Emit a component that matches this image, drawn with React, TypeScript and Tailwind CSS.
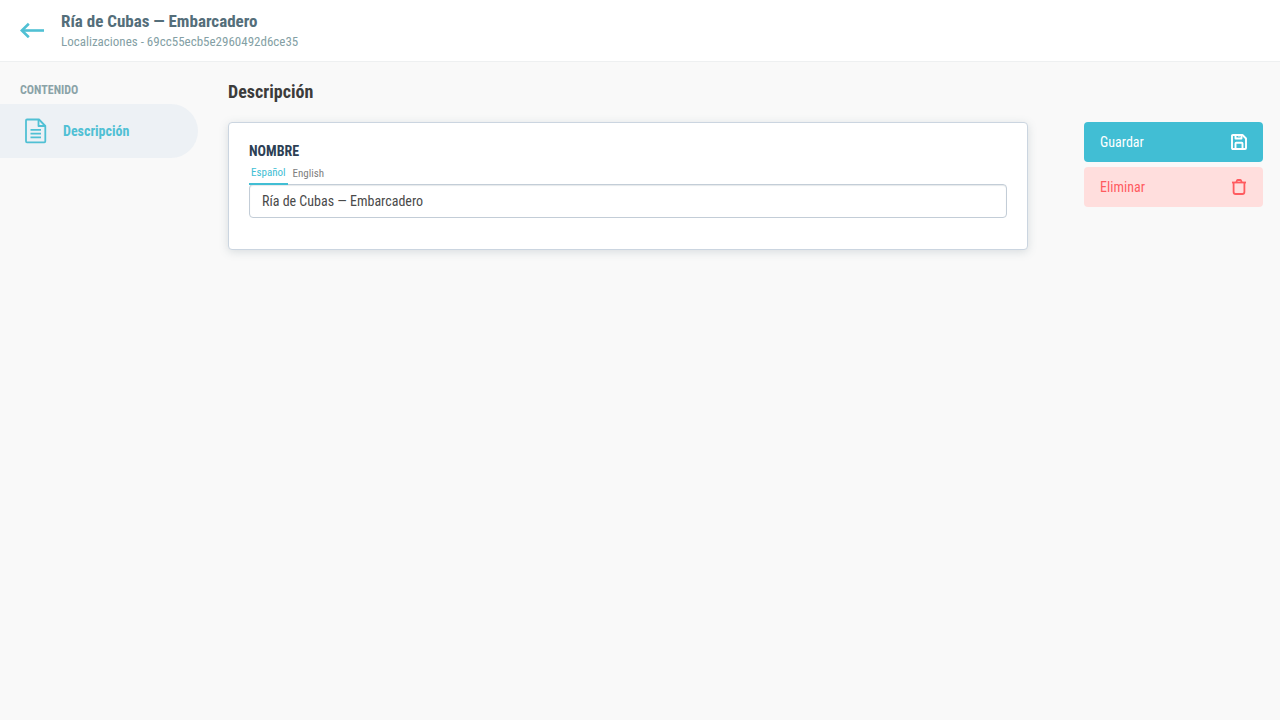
import { useState } from "react";

type Lang = "es" | "en";

const languages: { id: Lang; label: string }[] = [
  { id: "es", label: "Español" },
  { id: "en", label: "English" },
];

function ArrowIcon() {
  return (
    <svg width="24" height="16" viewBox="0 0 24 16" fill="none" stroke="currentColor" strokeWidth="2.6" aria-hidden="true">
      <path d="M24 8.5H2" />
      <path d="M8.8 1.7 1.8 8.5 8.8 15.3" />
    </svg>
  );
}

function DocumentIcon() {
  return (
    <svg width="22" height="26" viewBox="0 0 22 26" fill="none" stroke="currentColor" strokeWidth="1.8" strokeLinejoin="round" aria-hidden="true">
      <path d="M2 1.5H14L20.3 8V23.3Q20.3 24.3 19.3 24.3H2Q1 24.3 1 23.3V2.5Q1 1.5 2 1.5Z" />
      <path d="M13.5 1.5V8H20.3" />
      <path d="M5.5 11.8H16M5.5 15.6H16M5.5 19.4H16" />
    </svg>
  );
}

function SaveIcon() {
  return (
    <svg width="16" height="16" viewBox="0 0 16 16" fill="none" stroke="currentColor" strokeWidth="1.9" strokeLinejoin="round" aria-hidden="true">
      <path d="M2 1H11.5L15 4.5V14Q15 15 14 15H2Q1 15 1 14V2Q1 1 2 1Z" />
      <path d="M4.5 1V4.5H10.5V1" />
      <path d="M8 1V2.5" />
      <path d="M4.5 15V9.5Q4.5 8.8 5.2 8.8H10.8Q11.5 8.8 11.5 9.5V15" />
    </svg>
  );
}

function TrashIcon() {
  return (
    <svg width="16" height="16" viewBox="0 0 16 16" fill="none" stroke="currentColor" strokeWidth="1.8" aria-hidden="true">
      <path d="M1 3.5H15" />
      <path d="M5.2 3.5 6 1.5Q6.2 1 6.8 1H9.2Q9.8 1 10 1.5L10.8 3.5" />
      <path d="M2.6 3.5V13Q2.6 15 4.6 15H11.4Q13.4 15 13.4 13V3.5" />
    </svg>
  );
}

function App() {
  const [lang, setLang] = useState<Lang>("es");
  const [names, setNames] = useState<Record<Lang, string>>({
    es: "Ría de Cubas — Embarcadero",
    en: "",
  });

  return (
    <div className="min-h-screen bg-[#f9f9f9] font-['Roboto_Condensed',Roboto,sans-serif]">
      <header className="flex items-center gap-[17px] border-b border-[#eef0f1] bg-white px-5 pt-[9px] pb-[11px]">
        <a href="#localizaciones" aria-label="Volver" className="text-[#50c0d4]">
          <ArrowIcon />
        </a>
        <div>
          <h1 className="text-[17px] leading-6 font-bold text-[#546e7a]">Ría de Cubas — Embarcadero</h1>
          <p className="text-[13px] leading-[17px] text-[#849fa5]">Localizaciones - 69cc55ecb5e2960492d6ce35</p>
        </div>
      </header>

      <div className="flex items-start">
        <nav aria-labelledby="nav-title" className="w-[198px] shrink-0 pt-5">
          <h2 id="nav-title" className="mb-1.5 px-5 text-[12px] leading-4 font-bold text-[#8ba3a8]">
            CONTENIDO
          </h2>
          <a
            href="#descripcion"
            className="flex h-[54px] items-center gap-4 rounded-r-full bg-[#edf1f5] pl-[25px] text-[14px] font-bold text-[#50c0d4]"
          >
            <DocumentIcon />
            Descripción
          </a>
        </nav>

        <main id="descripcion" className="ml-[30px] flex-1 pt-[18px]">
          <h2 className="text-[18px] leading-6 font-bold text-[#3c3c3b]">Descripción</h2>
          <section className="mt-[18px] rounded border border-[#cbd5e0] bg-white px-5 pt-5 pb-[31px] shadow-[0_2px_10px_rgba(84,110,122,0.2)]">
            <label htmlFor="nombre" className="block text-[14px] leading-4 font-bold text-[#2d3f55]">
              NOMBRE
            </label>
            <div role="tablist" className="flex h-[26px] items-stretch gap-[3px]">
              {languages.map((item) => (
                <button
                  key={item.id}
                  type="button"
                  role="tab"
                  aria-selected={lang === item.id}
                  onClick={() => setLang(item.id)}
                  className={
                    lang === item.id
                      ? "border-b-2 border-[#41bed4] px-0.5 pt-1 text-[11px] text-[#41bed4]"
                      : "px-0.5 pt-1 text-[11px] text-[#808080]"
                  }
                >
                  {item.label}
                </button>
              ))}
            </div>
            <input
              id="nombre"
              type="text"
              value={names[lang]}
              onChange={(e) => setNames({ ...names, [lang]: e.target.value })}
              className="-mt-px block h-[34px] w-full rounded border border-[#c3cdd7] bg-white px-3 text-[14px] text-[#4a4a4a] shadow-[inset_0_1px_1px_rgba(84,110,122,0.15)] outline-none"
            />
          </section>
        </main>

        <aside className="mt-[60px] mr-[17px] ml-14 flex w-[179px] shrink-0 flex-col gap-[5px]">
          <button type="button" className="flex h-10 items-center justify-between rounded bg-[#41bed4] px-4 text-[14px] text-white">
            Guardar
            <SaveIcon />
          </button>
          <button type="button" className="flex h-10 items-center justify-between rounded bg-[#ffdedd] px-4 text-[14px] text-[#ff5b5f]">
            Eliminar
            <TrashIcon />
          </button>
        </aside>
      </div>
    </div>
  );
}

export default App;
